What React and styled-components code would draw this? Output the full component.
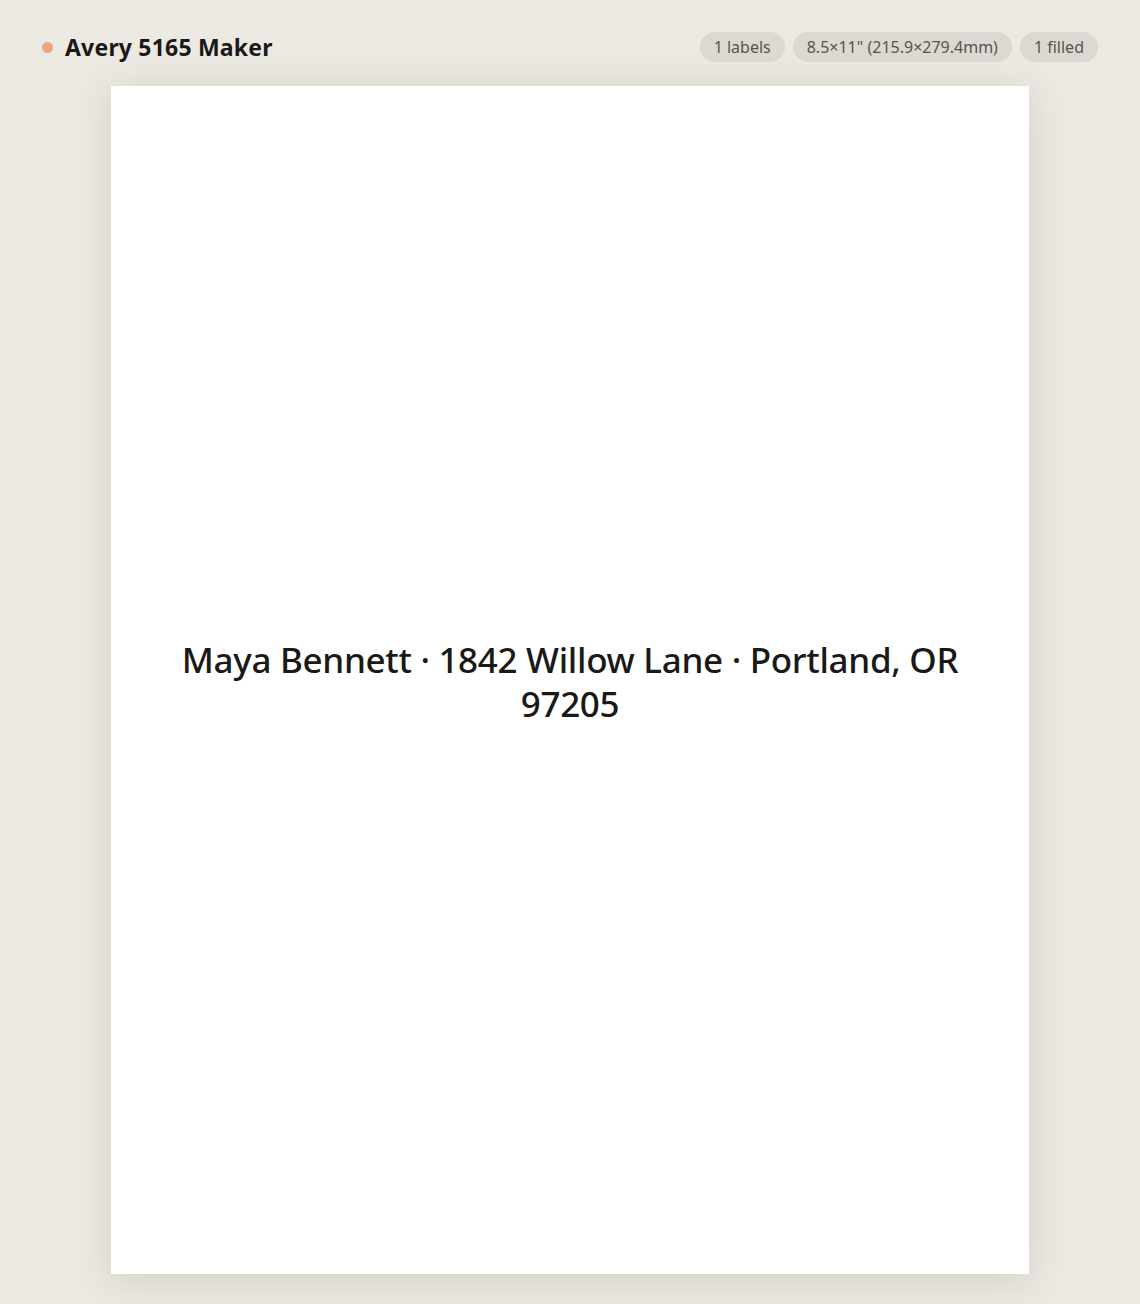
import React from "react";
import styled, { createGlobalStyle } from "styled-components";

const GlobalStyle = createGlobalStyle`
  html, body {
    margin: 0;
    padding: 0;
    background: #ece9e3;
  }
  body {
    font-family: "Noto Sans", "Open Sans", sans-serif;
    color: #1c1b19;
  }
`;

const Page = styled.div`
  min-height: 100vh;
  box-sizing: border-box;
  padding: 32px 42px 30px;
  display: flex;
  flex-direction: column;
  gap: 24px;
`;

const Header = styled.header`
  display: flex;
  align-items: center;
  justify-content: space-between;
  height: 30px;
`;

const Brand = styled.div`
  display: flex;
  align-items: center;
  gap: 12px;
`;

const Dot = styled.span`
  width: 11px;
  height: 11px;
  border-radius: 50%;
  background: #e9a77f;
`;

const Title = styled.h1`
  margin: 0;
  font-size: 23px;
  font-weight: 700;
  letter-spacing: 0.2px;
  color: #1a1917;
`;

const Pills = styled.div`
  display: flex;
  gap: 8px;
`;

const Pill = styled.span`
  display: inline-flex;
  align-items: center;
  height: 30px;
  padding: 0 14px;
  border-radius: 15px;
  background: #dcd9d3;
  color: #57544f;
  font-size: 16px;
`;

const Sheet = styled.main`
  align-self: center;
  width: 918px;
  height: 1188px;
  box-sizing: border-box;
  padding: 4px 56px 0;
  background: #ffffff;
  box-shadow: 0 6px 36px rgba(60, 50, 35, 0.14);
  display: flex;
  align-items: center;
  justify-content: center;
`;

const Address = styled.p`
  margin: 0;
  font-size: 35px;
  font-weight: 500;
  line-height: 44px;
  text-align: center;
  letter-spacing: -0.3px;
  color: #1a1917;
`;

export default function App() {
  const stats = ["1 labels", "8.5×11\" (215.9×279.4mm)", "1 filled"];
  return (
    <>
      <GlobalStyle />
      <Page>
        <Header>
          <Brand>
            <Dot />
            <Title>Avery 5165 Maker</Title>
          </Brand>
          <Pills>
            {stats.map((s) => (
              <Pill key={s}>{s}</Pill>
            ))}
          </Pills>
        </Header>
        <Sheet>
          <Address>Maya Bennett · 1842 Willow Lane · Portland, OR 97205</Address>
        </Sheet>
      </Page>
    </>
  );
}
